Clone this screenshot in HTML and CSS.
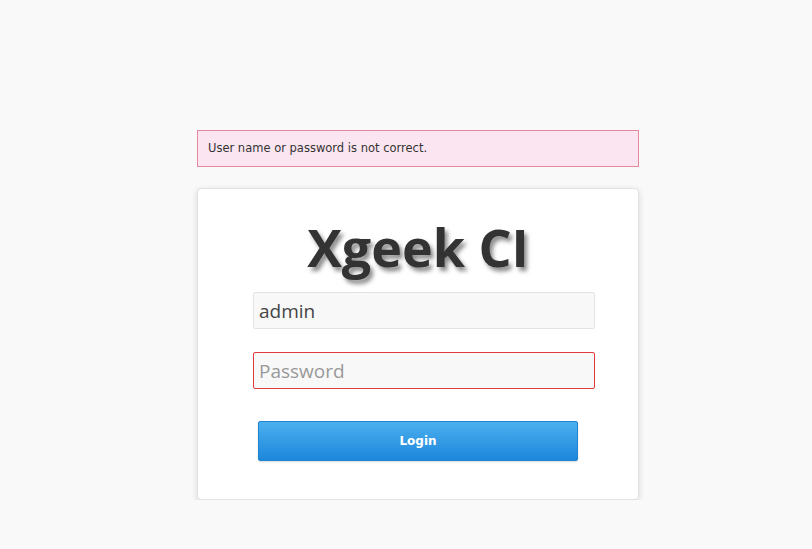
FILE: index.html
```html
<!DOCTYPE html>
<html lang="en">
<head>
    <meta charset="UTF-8">
    <title>Xgeek CI - Login</title>
    <link rel="stylesheet" href="styles.css">
</head>
<body>
    <div class="login">
        <div class="alert">User name or password is not correct.</div>
        <form class="card">
            <h1 class="brand">Xgeek CI</h1>
            <input class="field" type="text" value="admin">
            <input class="field error" type="password" placeholder="Password">
            <button class="btn" type="button">Login</button>
        </form>
    </div>
</body>
</html>
```

FILE: styles.css
```css
body {
    margin: 0;
    background-color: #f9f9f9;
    color: #333;
    font-family: "DejaVu Sans", Verdana, sans-serif;
}
.login {
    width: 442px;
    margin: 130px 0 0 197px;
}
.alert {
    box-sizing: border-box;
    height: 37px;
    padding: 0 10px;
    line-height: 35px;
    font-size: 11.5px;
    color: #333;
    background-color: #fbe5f1;
    border: 1px solid #e3899c;
}
.card {
    box-sizing: border-box;
    height: 312px;
    margin-top: 21px;
    background-color: #fff;
    border: 1px solid #e2e2e2;
    border-radius: 4px;
    box-shadow: 0 2px 6px rgba(0, 0, 0, 0.14);
    display: flex;
    flex-direction: column;
}
.brand {
    margin: 18px 0 0 0;
    height: 85px;
    line-height: 80px;
    text-align: center;
    font-family: "Open Sans", sans-serif;
    font-weight: 700;
    font-size: 52px;
    color: #333;
    text-shadow: 3px 4px 4px rgba(0, 0, 0, 0.45);
}
.field {
    box-sizing: border-box;
    width: 342px;
    height: 37px;
    margin: 0 0 0 55px;
    padding: 0 5px;
    font-family: "Open Sans", sans-serif;
    font-size: 19px;
    color: #444;
    background-color: #f8f8f8;
    border: 1px solid #e2e2e2;
    border-radius: 2px;
    outline: none;
}
.field + .field {
    margin-top: 23px;
}
.field::placeholder {
    color: #999;
}
.field.error {
    border-color: #e03a3e;
}
.btn {
    width: 320px;
    height: 40px;
    margin: 32px 0 0 60px;
    font-family: "DejaVu Sans", Verdana, sans-serif;
    font-size: 12px;
    font-weight: 700;
    color: #fff;
    background: linear-gradient(#4cb0ef, #1c86da);
    border: 1px solid #1f84d2;
    border-radius: 2px;
    box-shadow: 0 1px 2px rgba(0, 0, 0, 0.15);
    cursor: pointer;
}
```
